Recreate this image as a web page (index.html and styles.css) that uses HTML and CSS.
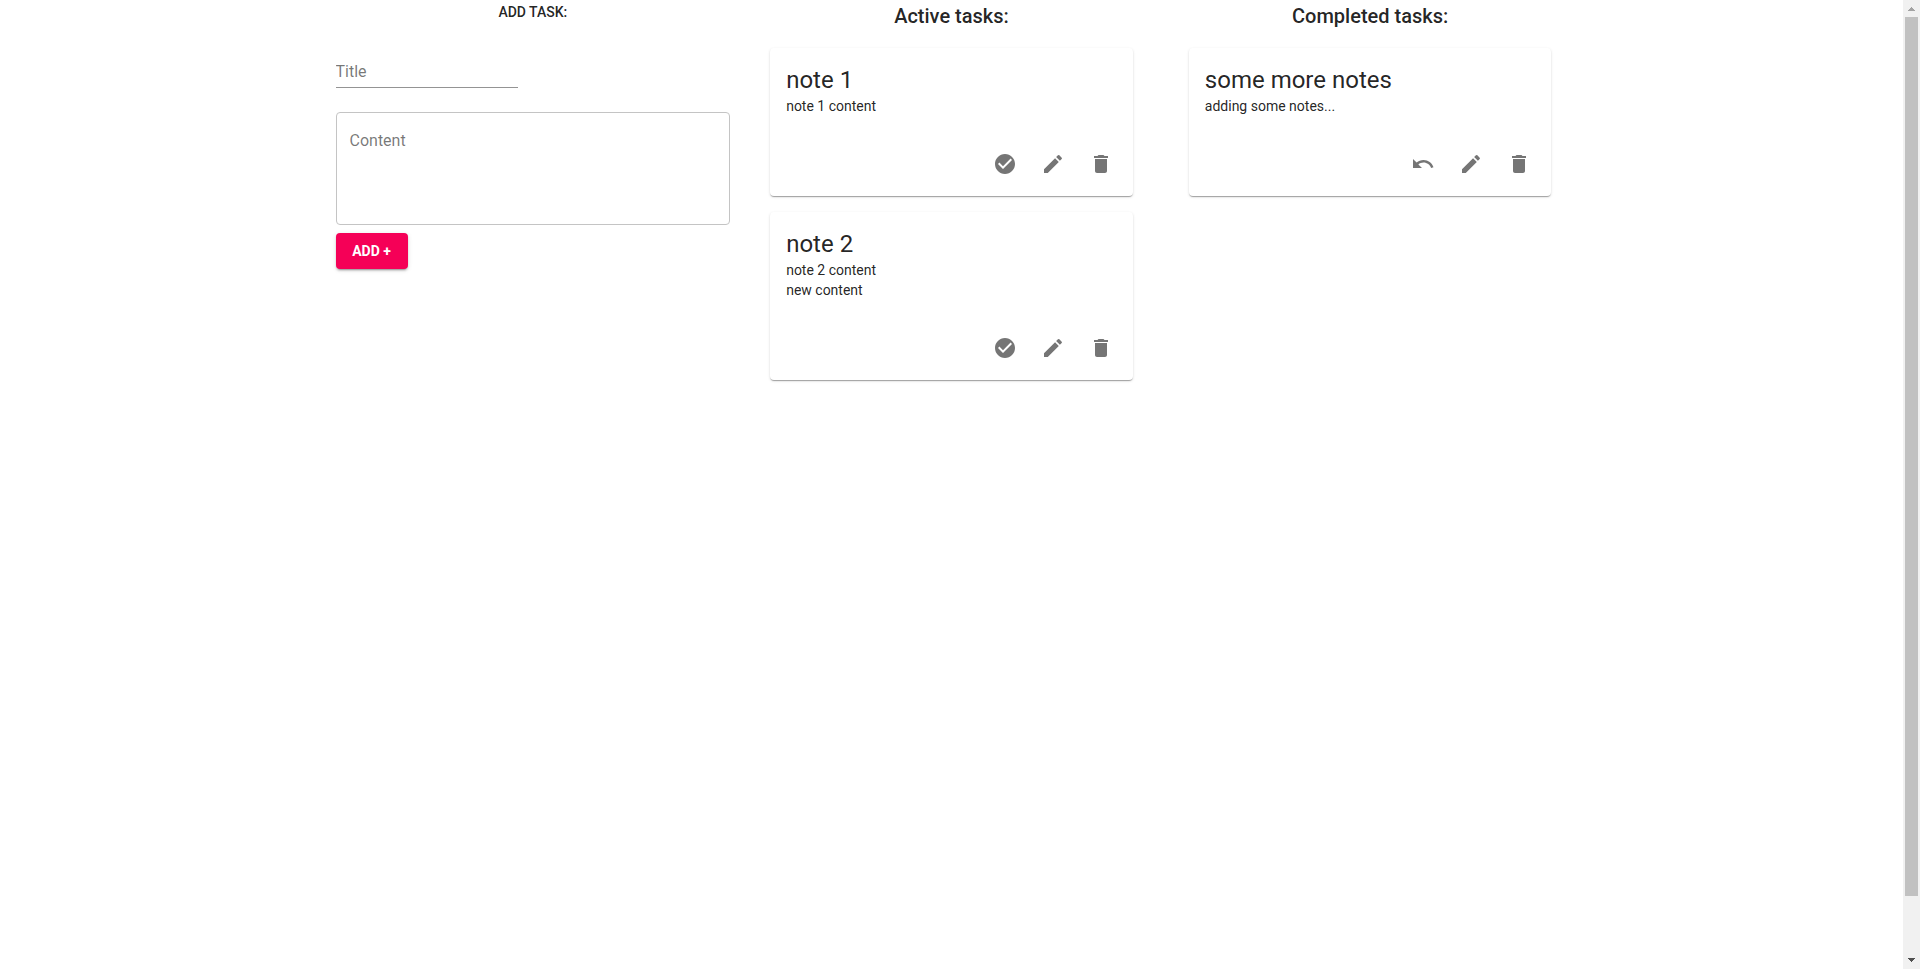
FILE: index.html
```html
<!DOCTYPE html>
<html lang="en">
<head>
<meta charset="utf-8">
<meta name="viewport" content="width=device-width, initial-scale=1">
<title>Tasks</title>
<link rel="stylesheet" href="styles.css">
</head>
<body>
<svg class="sprite" aria-hidden="true">
  <symbol id="check" viewBox="0 0 24 24"><path d="M12 2C6.48 2 2 6.48 2 12s4.48 10 10 10 10-4.48 10-10S17.52 2 12 2zm-2 15l-5-5 1.41-1.41L10 14.17l7.59-7.59L19 8l-9 9z"/></symbol>
  <symbol id="edit" viewBox="0 0 24 24"><path d="M3 17.25V21h3.75L17.81 9.94l-3.75-3.75L3 17.25zM20.71 7.04c.39-.39.39-1.02 0-1.41l-2.34-2.34a.9959.9959 0 00-1.41 0l-1.83 1.83 3.75 3.75 1.83-1.83z"/></symbol>
  <symbol id="trash" viewBox="0 0 24 24"><path d="M6 19c0 1.1.9 2 2 2h8c1.1 0 2-.9 2-2V7H6v12zM19 4h-3.500l-1-1h-5l-1 1H5v2h14V4z"/></symbol>
  <symbol id="undo" viewBox="0 0 24 24"><path d="M12.500 8c-2.650 0-5.050.990-6.900 2.600L2 7v9h9l-3.620-3.620c1.390-1.160 3.160-1.880 5.120-1.880 3.540 0 6.550 2.310 7.600 5.500l2.370-.780C21.080 11.030 17.150 8 12.500 8z"/></symbol>
</svg>
<div class="page">
  <main class="container">
    <section>
      <h2 class="form-heading">Add task:</h2>
      <form class="form">
        <input class="title-input" type="text" aria-label="Title" placeholder="Title">
        <textarea class="content-input" rows="4" aria-label="Content" placeholder="Content"></textarea>
        <button class="add-button" type="button">ADD +</button>
      </form>
    </section>
    <section>
      <h2 class="list-heading">Active tasks:</h2>
      <div class="list">
        <article class="card">
          <div class="card-content">
            <h3 class="card-title">note 1</h3>
            <p class="card-text">note 1 content</p>
          </div>
          <div class="card-actions">
            <button class="icon-button" type="button" aria-label="Complete"><svg class="icon"><use href="#check"/></svg></button>
            <button class="icon-button" type="button" aria-label="Edit"><svg class="icon"><use href="#edit"/></svg></button>
            <button class="icon-button" type="button" aria-label="Delete"><svg class="icon"><use href="#trash"/></svg></button>
          </div>
        </article>
        <article class="card">
          <div class="card-content">
            <h3 class="card-title">note 2</h3>
            <p class="card-text">note 2 content<br>new content</p>
          </div>
          <div class="card-actions">
            <button class="icon-button" type="button" aria-label="Complete"><svg class="icon"><use href="#check"/></svg></button>
            <button class="icon-button" type="button" aria-label="Edit"><svg class="icon"><use href="#edit"/></svg></button>
            <button class="icon-button" type="button" aria-label="Delete"><svg class="icon"><use href="#trash"/></svg></button>
          </div>
        </article>
      </div>
    </section>
    <section>
      <h2 class="list-heading">Completed tasks:</h2>
      <div class="list">
        <article class="card">
          <div class="card-content">
            <h3 class="card-title">some more notes</h3>
            <p class="card-text">adding some notes...</p>
          </div>
          <div class="card-actions">
            <button class="icon-button" type="button" aria-label="Reopen"><svg class="icon"><use href="#undo"/></svg></button>
            <button class="icon-button" type="button" aria-label="Edit"><svg class="icon"><use href="#edit"/></svg></button>
            <button class="icon-button" type="button" aria-label="Delete"><svg class="icon"><use href="#trash"/></svg></button>
          </div>
        </article>
      </div>
    </section>
  </main>
  <div class="scrollbar" aria-hidden="true">
    <svg class="arrow arrow-up" viewBox="0 0 17 17" shape-rendering="crispEdges"><path d="M8 7h1v1h1v1h1v1h1v1H5v-1h1V9h1V8h1z"/></svg>
    <div class="track"><div class="thumb"></div></div>
    <svg class="arrow arrow-down" viewBox="0 0 17 17" shape-rendering="crispEdges"><path d="M5 6h7v1h-1v1h-1v1H9v1H8V9H7V8H6V7H5z"/></svg>
  </div>
</div>
</body>
</html>
```
FILE: styles.css
```css
* {
  box-sizing: border-box;
}

body {
  margin: 0;
  background: #fff;
  color: rgba(0, 0, 0, 0.87);
  font-family: Roboto, "Liberation Sans", sans-serif;
}

h2,
h3,
p {
  margin: 0;
}

.sprite {
  display: none;
}

.page {
  display: flex;
  height: 100vh;
}

.container {
  display: grid;
  flex: 1;
  grid-template-columns: repeat(3, minmax(0, 1fr));
  align-items: start;
  gap: 24px;
  max-width: 1280px;
  margin: 0 auto;
  padding: 0 24px;
}

.form-heading {
  font-size: 14px;
  font-weight: 500;
  line-height: 24px;
  text-align: center;
  text-transform: uppercase;
}

.form {
  display: flex;
  flex-direction: column;
  align-items: flex-start;
  padding-top: 32px;
}

.title-input,
.content-input {
  color: inherit;
  background: transparent;
  font-family: inherit;
  font-size: 16px;
  line-height: 19px;
  outline: 0;
}

.title-input {
  width: 182px;
  height: 32px;
  padding: 6px 0;
  border: 0;
  border-bottom: 1px solid #949494;
}

.content-input {
  display: block;
  width: 100%;
  margin: 24px 0 8px;
  padding: 18px 13px 17px;
  border: 1px solid #c4c4c4;
  border-radius: 4px;
  resize: none;
  overflow: hidden;
}

.title-input::placeholder,
.content-input::placeholder {
  color: rgba(0, 0, 0, 0.54);
  opacity: 1;
}

.add-button {
  min-width: 72px;
  padding: 6px 12px;
  border: 0;
  border-radius: 4px;
  background: #f50057;
  color: #fff;
  box-shadow: 0 3px 1px -2px rgba(0, 0, 0, 0.2), 0 2px 2px 0 rgba(0, 0, 0, 0.14), 0 1px 5px 0 rgba(0, 0, 0, 0.12);
  font-family: inherit;
  font-size: 14px;
  font-weight: 700;
  line-height: 24px;
  cursor: pointer;
}

.list-heading {
  font-size: 20px;
  font-weight: 500;
  line-height: 32px;
  text-align: center;
}

.list {
  display: flex;
  flex-direction: column;
  gap: 16px;
  padding: 16px;
}

.card {
  border-radius: 4px;
  background: #fff;
  box-shadow: 0 2px 1px -1px rgba(0, 0, 0, 0.2), 0 1px 1px 0 rgba(0, 0, 0, 0.14), 0 1px 3px 0 rgba(0, 0, 0, 0.12);
}

.card-content {
  padding: 16px;
}

.card-title {
  font-size: 24px;
  font-weight: 400;
  line-height: 32px;
}

.card-text {
  font-size: 14px;
  line-height: 20px;
}

.card-actions {
  display: flex;
  justify-content: flex-end;
  padding: 8px;
}

.icon-button {
  padding: 12px;
  border: 0;
  background: transparent;
  color: #757575;
  cursor: pointer;
}

.icon {
  display: block;
  width: 24px;
  height: 24px;
  fill: currentColor;
}

.scrollbar {
  display: flex;
  flex-direction: column;
  width: 17px;
  background: #f1f1f1;
}

.arrow {
  width: 17px;
  height: 17px;
}

.arrow-up {
  fill: #a3a3a3;
}

.arrow-down {
  fill: #505050;
}

.track {
  flex: 1;
  padding: 0 2px;
}

.thumb {
  height: 94%;
  background: #c1c1c1;
}
```
